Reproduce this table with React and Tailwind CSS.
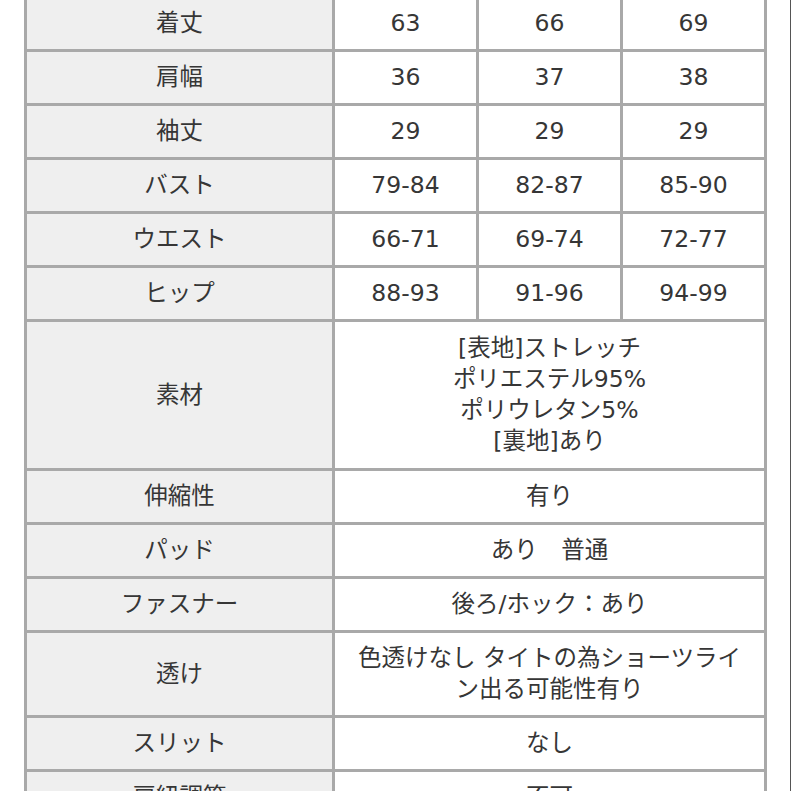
const rows = [
    { label: "着丈", values: ["63", "66", "69"] },
    { label: "肩幅", values: ["36", "37", "38"] },
    { label: "袖丈", values: ["29", "29", "29"] },
    { label: "バスト", values: ["79-84", "82-87", "85-90"] },
    { label: "ウエスト", values: ["66-71", "69-74", "72-77"] },
    { label: "ヒップ", values: ["88-93", "91-96", "94-99"] },
    { label: "素材", span: ["[表地]ストレッチ", "ポリエステル95%", "ポリウレタン5%", "[裏地]あり"], h: "h-[146px]" },
    { label: "伸縮性", span: ["有り"] },
    { label: "パッド", span: ["あり\u3000普通"] },
    { label: "ファスナー", span: ["後ろ/ホック：あり"] },
    { label: "透け", span: ["色透けなし タイトの為ショーツライ", "ン出る可能性有り"], h: "h-[82px]" },
    { label: "スリット", span: ["なし"] },
    { label: "肩紐調節", span: ["不可"] },
];

const font = { fontFamily: '"DejaVu Sans", "Noto Sans CJK JP", sans-serif' };

const App = () => {
    return (
        <div className="relative w-[791px] h-[791px] overflow-hidden bg-white" style={font}>
            <div className="ml-[24px] mt-[-5px] w-[743px] bg-[#a9a9a9] p-[3px] grid grid-cols-[305px_141px_141px_141px] gap-[3px] text-[23.5px] text-[#363636] leading-[31px]">
                {rows.map((row) => (
                    <div key={row.label} className="contents">
                        <div className={`${row.h || "h-[51px]"} bg-[#efefef] flex items-center justify-center`}>
                            {row.label}
                        </div>
                        {row.values ? (
                            row.values.map((v, i) => (
                                <div key={i} className="h-[51px] bg-white flex items-center justify-center">
                                    {v}
                                </div>
                            ))
                        ) : (
                            <div className={`${row.h || "h-[51px]"} col-span-3 bg-white flex flex-col items-center justify-center text-center`}>
                                {row.span.map((line, i) => (
                                    <div key={i}>{line}</div>
                                ))}
                            </div>
                        )}
                    </div>
                ))}
            </div>
            {/* thin edge line on the right */}
            <div className="absolute top-0 right-0 w-px h-full bg-[#555]"></div>
        </div>
    );
};

export default App;
